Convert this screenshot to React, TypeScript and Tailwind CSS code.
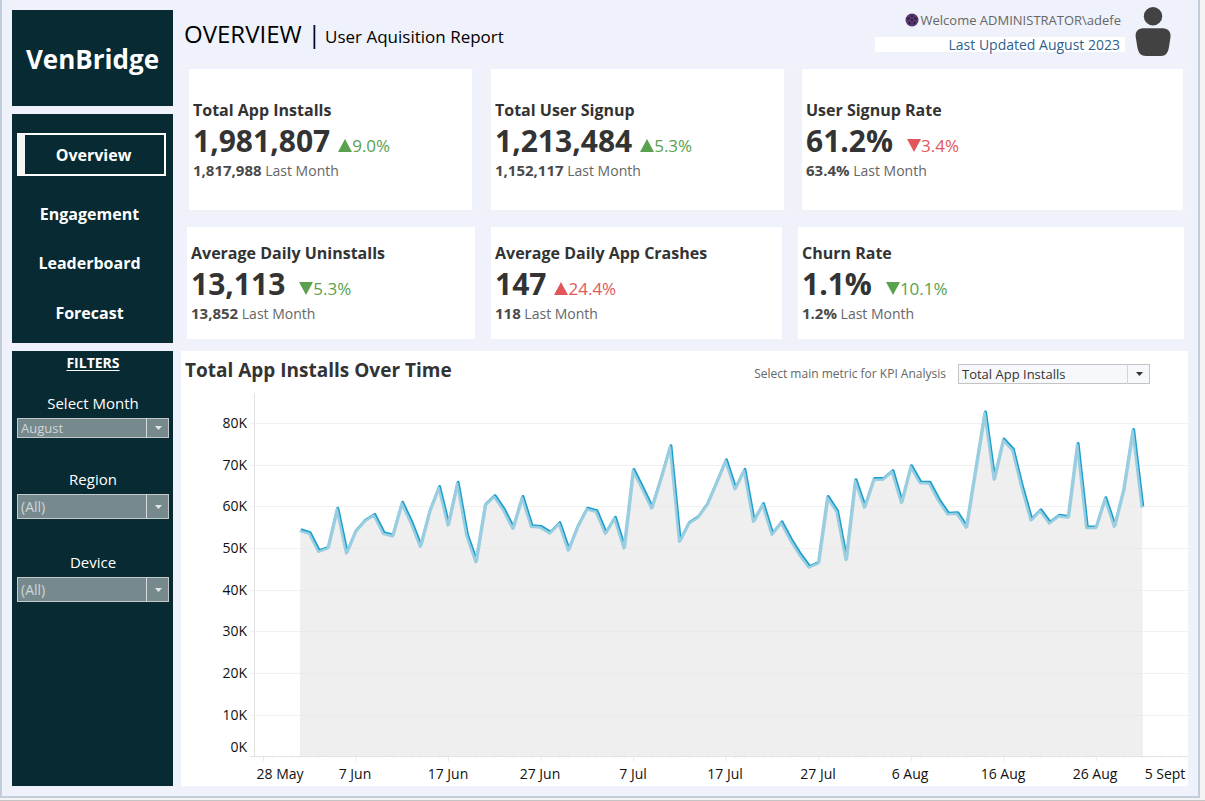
import React from "react";

type Trend = "up" | "down";

interface Kpi {
  title: string;
  value: string;
  trend: Trend;
  good: boolean;
  change: string;
  previous: string;
}

const primaryKpis: Kpi[] = [
  { title: "Total App Installs", value: "1,981,807", trend: "up", good: true, change: "9.0%", previous: "1,817,988" },
  { title: "Total User Signup", value: "1,213,484", trend: "up", good: true, change: "5.3%", previous: "1,152,117" },
  { title: "User Signup Rate", value: "61.2%", trend: "down", good: false, change: "3.4%", previous: "63.4%" },
];

const secondaryKpis: Kpi[] = [
  { title: "Average Daily Uninstalls", value: "13,113", trend: "down", good: true, change: "5.3%", previous: "13,852" },
  { title: "Average Daily App Crashes", value: "147", trend: "up", good: false, change: "24.4%", previous: "118" },
  { title: "Churn Rate", value: "1.1%", trend: "down", good: true, change: "10.1%", previous: "1.2%" },
];

// Daily installs in thousands, 1 June to 31 August.
const installs = [
  54.3, 53.6, 49.3, 50.1, 59.5, 48.9, 54.1, 56.6, 58, 53.6, 53, 60.9, 56.2, 50.5, 58.9, 64.7, 55.6, 65.7, 53.2, 46.8,
  60.4, 62.5, 59.2, 54.8, 62.3, 55.3, 55.1, 53.7, 56, 49.6, 55.3, 59.5, 58.9, 53.6, 57.3, 50.1, 68.8, 64.3, 59.7, 66.9,
  74.5, 51.7, 56, 57.5, 60.6, 65.8, 71.1, 64.3, 68.8, 56.5, 60.6, 53.4, 56.2, 52.1, 48.5, 45.5, 46.5, 62.3, 58.9, 47.3,
  66.3, 59.9, 66.6, 66.6, 68.5, 61, 69.7, 65.8, 65.7, 61.5, 58.3, 58.4, 55.1, 69, 82.6, 66.6, 76.1, 73.7, 64.7, 56.8,
  59.1, 56.1, 57.8, 57.5, 75, 55, 55, 62, 55.3, 64.1, 78.4, 59.9,
];

const xLabels: { x: number; text: string }[] = [
  { x: 99, text: "28 May" },
  { x: 174, text: "7 Jun" },
  { x: 267, text: "17 Jun" },
  { x: 359, text: "27 Jun" },
  { x: 452, text: "7 Jul" },
  { x: 544, text: "17 Jul" },
  { x: 637, text: "27 Jul" },
  { x: 729, text: "6 Aug" },
  { x: 822, text: "16 Aug" },
  { x: 914, text: "26 Aug" },
  { x: 984, text: "5 Sept" },
];

function Triangle({ direction }: { direction: Trend }) {
  return (
    <svg viewBox="0 0 14 13" className="h-[13px] w-[14px] fill-current" aria-hidden="true">
      <path d={direction === "up" ? "M7 0 14 13H0Z" : "M0 0H14L7 13Z"} />
    </svg>
  );
}

function KpiBody({ kpi }: { kpi: Kpi }) {
  return (
    <>
      <h2 className="text-base leading-6 font-bold">{kpi.title}</h2>
      <p
        className={
          kpi.trend === "up"
            ? "flex items-baseline gap-2 text-[30px] leading-[38px] font-bold"
            : "flex items-baseline gap-3.5 text-[30px] leading-[38px] font-bold"
        }
      >
        {kpi.value}
        <span
          className={
            kpi.good
              ? "flex items-baseline text-[17px] leading-6 font-normal text-[#59a14f]"
              : "flex items-baseline text-[17px] leading-6 font-normal text-[#e15759]"
          }
        >
          <Triangle direction={kpi.trend} />
          {kpi.change}
        </span>
      </p>
      <p className="text-sm leading-5 text-[#666]">
        <b className="text-[15px] text-[#4a4a4a]">{kpi.previous}</b> Last Month
      </p>
    </>
  );
}

function DarkSelect({ id, label, value, tall }: { id: string; label: string; value: string; tall?: boolean }) {
  return (
    <div>
      <label htmlFor={id} className="block text-center text-[15px] leading-[26px] text-white">
        {label}
      </label>
      <div className="relative mt-0.5 text-[#e3e7e8]">
        <select
          id={id}
          className={
            tall
              ? "block h-[25px] w-full appearance-none border border-[#c3cacb] bg-[#768a8d] pl-[3px] text-[14px] text-[#d0d6d7]"
              : "block h-5 w-full appearance-none border border-[#c3cacb] bg-[#768a8d] pl-[3px] text-[13px] leading-4 text-[#d0d6d7]"
          }
        >
          <option>{value}</option>
        </select>
        <span className="pointer-events-none absolute inset-y-0 right-0 flex w-[23px] items-center justify-center border-l border-[#d5dadb]">
          <Caret />
        </span>
      </div>
    </div>
  );
}

function Caret() {
  return (
    <svg viewBox="0 0 7 4" className="h-1 w-[7px] fill-current" aria-hidden="true">
      <path d="M0 0H7L3.5 4Z" />
    </svg>
  );
}

function InstallsChart() {
  const zeroY = 363.5;
  const perK = 4.167;
  const points = installs.map((v, i) => `${(119.2 + i * 9.253).toFixed(1)},${(zeroY - v * perK).toFixed(1)}`).join(" ");
  const ticks = Array.from({ length: 100 }, (_, i) => i);
  return (
    <svg viewBox="0 0 1007 393" className="block h-auto w-full" role="img" aria-label="Total App Installs Over Time">
      {[1, 2, 3, 4, 5, 6, 7, 8].map((n) => (
        <line key={n} x1="69" x2="1007" y1={Math.round(zeroY - n * 41.67) + 0.5} y2={Math.round(zeroY - n * 41.67) + 0.5} stroke="#f0f0f0" />
      ))}
      <polyline points={points} fill="none" stroke="#1c9fce" strokeWidth="3" strokeLinejoin="round" transform="translate(0.6 -0.4)" />
      <polygon points={`119,${zeroY} ${points} 962,${zeroY}`} fill="#e6e6e6" fillOpacity="0.66" />
      <polyline points={points} fill="none" stroke="#99cde0" strokeWidth="2.5" strokeLinejoin="round" transform="translate(-0.4 0.7)" />
      <line x1="73.5" x2="73.5" y1="0" y2="364" stroke="#e2e2e2" />
      <line x1="69" x2="1007" y1={zeroY} y2={zeroY} stroke="#e2e2e2" />
      {ticks.map((i) => (
        <line key={i} x1={82.5 + i * 9.253} x2={82.5 + i * 9.253} y1="364" y2={i % 10 === 0 ? 368 : 365} stroke="#e8e8e8" />
      ))}
      <g fontSize="14" fill="#111" textAnchor="end">
        {[1, 2, 3, 4, 5, 6, 7, 8].map((n) => (
          <text key={n} x="66" y={Math.round(zeroY - n * 41.67) + 5}>
            {n * 10}K
          </text>
        ))}
        <text x="66" y="359">
          0K
        </text>
      </g>
      <g fontSize="14" fill="#111" textAnchor="middle">
        {xLabels.map((l) => (
          <text key={l.text} x={l.x} y="386">
            {l.text}
          </text>
        ))}
      </g>
    </svg>
  );
}

function Sidebar() {
  return (
    <aside className="flex w-[161px] shrink-0 flex-col gap-2 pt-2.5 text-white">
      <div className="flex h-24 items-center justify-center bg-[#082a33] pt-0.5 text-[26px] font-bold">VenBridge</div>
      <nav className="flex h-[229px] flex-col bg-[#082a33] pt-[19px] pr-[7px] pl-[5px] text-base font-bold">
        <a
          href="#overview"
          aria-current="page"
          className="mb-[13px] flex h-[43px] items-center justify-center border-2 border-l-8 border-white border-l-[#f5f5f5] pr-0.5"
        >
          Overview
        </a>
        <a href="#engagement" className="flex h-[49px] items-center justify-center pr-1">
          Engagement
        </a>
        <a href="#leaderboard" className="flex h-[50px] items-center justify-center pr-1">
          Leaderboard
        </a>
        <a href="#forecast" className="flex h-[49px] items-center justify-center pr-1">
          Forecast
        </a>
      </nav>
      <section className="flex-1 bg-[#082a33] pr-1 pl-[5px]">
        <h2 className="text-center text-sm leading-[23px] font-bold underline underline-offset-2">FILTERS</h2>
        <div className="mt-4 flex flex-col gap-7">
          <DarkSelect id="month" label="Select Month" value="August" />
          <DarkSelect id="region" label="Region" value="(All)" tall />
          <div className="pt-0.5">
            <DarkSelect id="device" label="Device" value="(All)" tall />
          </div>
        </div>
      </section>
    </aside>
  );
}

function Header() {
  return (
    <header className="flex h-[65px] justify-between">
      <h1 className="flex items-baseline pt-4 pl-[3px] text-[24px] leading-9 font-normal text-black">
        OVERVIEW&nbsp;|<span className="ml-1 text-[17px]">User Aquisition Report</span>
      </h1>
      <div className="flex pr-[17px]">
        <div className="w-[250px] pt-2.5">
          <p className="flex items-center justify-end gap-0.5 pr-1 text-[13px] leading-5 text-[#666]">
            <svg viewBox="0 0 14 14" className="h-3.5 w-3.5" aria-hidden="true">
              <circle cx="7" cy="7" r="6.5" fill="#55356b" />
              <g fill="#24142f">
                <circle cx="7" cy="3" r="1" />
                <circle cx="3.5" cy="5.5" r="1" />
                <circle cx="10.5" cy="5.5" r="1" />
                <circle cx="7" cy="7" r="0.9" />
                <circle cx="4.5" cy="10" r="1" />
                <circle cx="9.5" cy="10" r="1" />
              </g>
            </svg>
            Welcome ADMINISTRATOR\adefe
          </p>
          <p className="mt-[7px] h-[15px] bg-white pr-[5px] text-right text-sm leading-[15px] text-[#2f5f8f]">
            Last Updated August 2023
          </p>
        </div>
        <svg viewBox="0 0 36 50" className="mt-[7px] ml-2.5 h-[50px] w-9" role="img" aria-label="User">
          <circle cx="18" cy="9.3" r="9.2" fill="#424242" />
          <path
            d="M8 21.3H28C33 21.3 36 25 35.5 30L34 40C33 46 30.5 49 26 49H11C6 49 3.5 46 2.5 41L.7 30C0 25 3 21.3 8 21.3Z"
            fill="#424242"
          />
        </svg>
      </div>
    </header>
  );
}

export default function App() {
  return (
    <div className="min-h-screen border-b border-[#c4c4c4] bg-[#f4f4f4] pr-[5px] pb-0.5 font-['Open_Sans','Noto_Sans',sans-serif] text-[#333]">
      <div className="flex min-h-[798px] gap-2 border-x-2 border-b-2 border-[#c2cddb] bg-[#eff2fa] pr-2.5 pb-2.5 pl-2.5">
        <Sidebar />
        <main className="flex min-w-0 flex-1 flex-col">
          <Header />
          <section className="grid h-[149px] grid-cols-[297fr_303fr_391fr] gap-2">
            {primaryKpis.map((kpi) => (
              <div key={kpi.title} className="flex border border-[#f4f4f7] px-1 py-[3px] first:pr-[5px] first:pl-[7px]">
                <article className="flex-1 bg-white pt-[29px] pl-1">
                  <KpiBody kpi={kpi} />
                </article>
              </div>
            ))}
          </section>
          <section className="mt-[13px] grid h-28 grid-cols-[288fr_291fr_386fr] gap-4 pr-1 pl-1.5">
            {secondaryKpis.map((kpi) => (
              <article key={kpi.title} className="bg-white pt-3.5 pl-1">
                <KpiBody kpi={kpi} />
              </article>
            ))}
          </section>
          <section className="mt-3 flex-1 bg-white">
            <div className="flex h-[42px] items-start justify-between pr-[38px] pl-1">
              <h2 className="pt-[3px] text-[19px] leading-8 font-bold">Total App Installs Over Time</h2>
              <div className="flex items-center gap-3 pt-[13px]">
                <label htmlFor="metric" className="text-xs leading-5 text-[#666]">
                  Select main metric for KPI Analysis
                </label>
                <div className="relative w-48 text-[#333]">
                  <select
                    id="metric"
                    className="block h-5 w-full appearance-none border border-[#c4c4c4] bg-[#f6f8fc] pl-[3px] text-[13px] leading-4 text-[#333]"
                  >
                    <option>Total App Installs</option>
                  </select>
                  <span className="pointer-events-none absolute inset-y-0 right-0 flex w-[23px] items-center justify-center border-l border-[#d4d4d4]">
                    <Caret />
                  </span>
                </div>
              </div>
            </div>
            <InstallsChart />
          </section>
        </main>
      </div>
    </div>
  );
}
